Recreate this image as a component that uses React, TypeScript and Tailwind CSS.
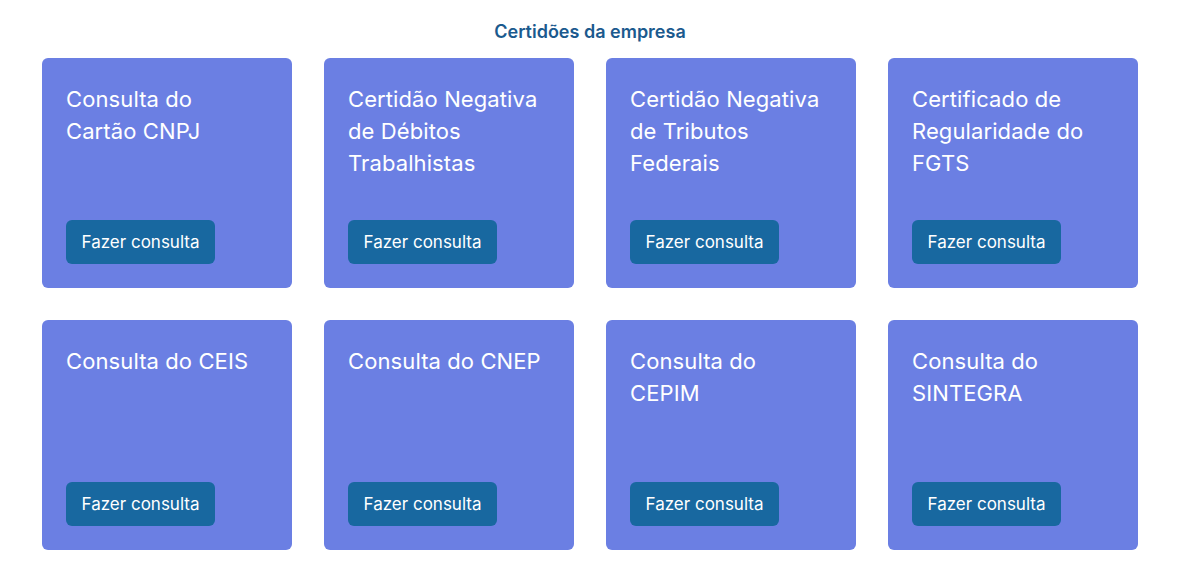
const certidoes = [
  "Consulta do Cartão CNPJ",
  "Certidão Negativa de Débitos Trabalhistas",
  "Certidão Negativa de Tributos Federais",
  "Certificado de Regularidade do FGTS",
  "Consulta do CEIS",
  "Consulta do CNEP",
  "Consulta do CEPIM",
  "Consulta do SINTEGRA",
];

function CertCard({ title }: { title: string }) {
  return (
    <div className="flex h-[230px] flex-col justify-between rounded-md bg-[#6b7fe3] px-6 pt-[25px] pb-6">
      <h3 className="pr-2 text-[22px] leading-8 font-normal tracking-[0.1px] text-white">{title}</h3>
      <button className="h-11 w-[149px] rounded-md bg-[#1868a0] pt-[2px] text-[17px] text-white">
        Fazer consulta
      </button>
    </div>
  );
}

export default function App() {
  return (
    <div className="min-h-screen bg-white font-['Inter',sans-serif]">
      <div className="ml-[42px] w-[1096px] pt-5">
        <h2 className="mb-[14px] text-center text-[18px] leading-6 font-semibold text-[#1b5a8e]">
          Certidões da empresa
        </h2>
        <div className="grid grid-cols-4 gap-8">
          {certidoes.map((c) => (
            <CertCard key={c} title={c} />
          ))}
        </div>
      </div>
    </div>
  );
}
